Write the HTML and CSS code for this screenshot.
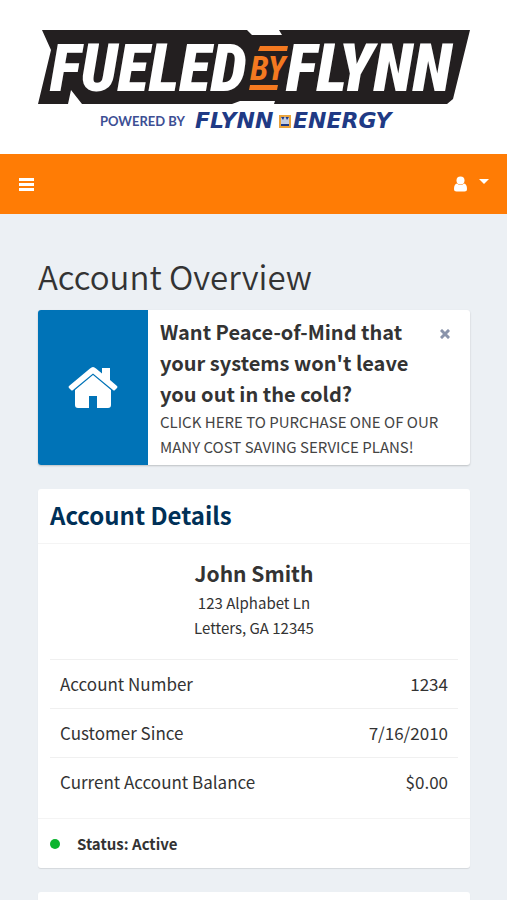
FILE: index.html
```html
<!DOCTYPE html>
<html lang="en">
<head>
    <meta charset="UTF-8">
    <meta name="viewport" content="width=device-width, initial-scale=1.0">
    <title>Account Overview</title>
    <link rel="stylesheet" href="styles.css">
</head>
<body>

<header>
    <a href="#" class="logo">
        <svg viewBox="0 0 432 104" role="img" aria-label="Fueled by Flynn, powered by Flynn Energy">
            <path class="logo-plate" d="M4 0H209L214 5H244L241 0H432L415 69L409 74H236L237 71H202L194 74H44L33 60L30 74H0L13 20Z"/>
            <text class="logo-word" x="12" y="61">FUELED</text>
            <text class="logo-word" x="248" y="61">FLYNN</text>
            <path class="logo-bar" d="M222 16H250L249 21H220ZM212 55H240L239 60H211Z"/>
            <text class="logo-by" x="212" y="50">BY</text>
            <text class="logo-powered" x="62" y="96">POWERED BY</text>
            <text class="logo-energy" x="157" y="98">FLYNN</text>
            <path class="logo-badge" d="M242 86H252V97H242Z"/>
            <path class="logo-crown" d="M243 94V87L245 90L247 86L249 90L251 87V94Z"/>
            <text class="logo-energy" x="255" y="98">ENERGY</text>
        </svg>
    </a>
    <nav class="navbar">
        <button type="button" class="nav-button" aria-label="Toggle navigation">
            <svg width="15" height="13" viewBox="0 0 15 13"><path d="M0 0h15v3H0zM0 5h15v3H0zM0 10h15v3H0z"/></svg>
        </button>
        <button type="button" class="nav-button user-menu" aria-label="User menu">
            <svg width="13" height="16" viewBox="0 0 13 16"><circle cx="6.500" cy="4.500" r="4"/><path d="M3 7.500Q6.500 10.500 10 7.500Q13 8 13 13Q13 15.500 10.500 15.500H2.500Q0 15.500 0 13Q0 8 3 7.500Z"/></svg>
            <svg class="caret" width="10" height="5" viewBox="0 0 10 5"><path d="M0 0h10L5 5z"/></svg>
        </button>
    </nav>
</header>

<main class="content">
    <h1>Account Overview</h1>

    <section class="promo">
        <div class="promo-icon">
            <svg width="50" height="42" viewBox="0 0 50 42">
                <path d="M25 8L43 23V38Q43 41 40 41H29V29H21V41H10Q7 41 7 38V23Z"/>
                <path d="M25 0Q26.500 0 28 1.500L34 6.500V1H42V13L49 19Q50 20 49 21L47 23Q46 24 45 23L25 6.500L5 23Q4 24 3 23L1 21Q0 20 1 19L22 1.500Q23.500 0 25 0Z"/>
            </svg>
        </div>
        <div class="promo-body">
            <div class="promo-heading">
                <h2>Want Peace-of-Mind that your systems won't leave you out in the cold?</h2>
                <button type="button" class="close" aria-label="Close">
                    <svg width="10" height="10" viewBox="0 0 10 10"><path d="M2 2L8 8M8 2L2 8"/></svg>
                </button>
            </div>
            <a href="#">CLICK HERE TO PURCHASE ONE OF OUR MANY COST SAVING SERVICE PLANS!</a>
        </div>
    </section>

    <section class="card">
        <h2 class="card-title">Account Details</h2>
        <div class="card-body">
            <h3>John Smith</h3>
            <address>123 Alphabet Ln<br>Letters, GA 12345</address>
            <dl class="details">
                <div class="row">
                    <dt>Account Number</dt>
                    <dd>1234</dd>
                </div>
                <div class="row">
                    <dt>Customer Since</dt>
                    <dd>7/16/2010</dd>
                </div>
                <div class="row">
                    <dt>Current Account Balance</dt>
                    <dd>$0.00</dd>
                </div>
            </dl>
        </div>
        <div class="card-footer">
            <span class="dot"></span>
            <strong>Status: Active</strong>
        </div>
    </section>

    <section class="card next-card"></section>
</main>

</body>
</html>
```
FILE: styles.css
```css
* {
    box-sizing: border-box;
}

body {
    margin: 0;
    font-family: "Noto Sans CJK SC", "Open Sans", sans-serif;
    font-size: 15px;
    line-height: 25px;
    color: #333;
    background-color: #ecf0f4;
}

h1, h2, h3, dl, dd {
    margin: 0;
}

button {
    padding: 0;
    border: none;
    background: none;
    cursor: pointer;
}

svg {
    display: block;
}

.logo {
    display: block;
    padding: 30px 37px 20px 38px;
    background-color: #fff;
}

.logo svg {
    width: 100%;
}

.logo-plate {
    fill: #231f20;
}

.logo-word {
    font: italic 900 66px "Roboto Condensed", "Open Sans Condensed", Roboto, sans-serif;
    fill: #fff;
}

.logo-by {
    font: italic 700 34px "Roboto Condensed", "Open Sans Condensed", Roboto, sans-serif;
    fill: #f47920;
}

.logo-bar {
    fill: #f47920;
}

.logo-powered {
    font: 700 13px Lato, sans-serif;
    fill: #3d4f94;
}

.logo-energy {
    font: italic 700 22px "DejaVu Sans", sans-serif;
    fill: #203a85;
}

.logo-badge {
    fill: #203a85;
    stroke: #eba33a;
    stroke-width: 2;
}

.logo-crown {
    fill: #c5cde2;
}

.navbar {
    display: flex;
    justify-content: space-between;
    align-items: center;
    height: 60px;
    padding: 0 18px 0 19px;
    background-color: #ff7c05;
}

.nav-button {
    display: flex;
    gap: 12px;
}

.nav-button svg {
    fill: #fff;
}

.nav-button .caret {
    margin-top: 3px;
}

.content {
    padding: 38px 37px 24px 38px;
}

h1 {
    margin-bottom: 10px;
    font-size: 33px;
    font-weight: 350;
    line-height: 48px;
}

.promo {
    display: flex;
    margin-bottom: 24px;
    border-radius: 3px;
    background-color: #fff;
    box-shadow: 0 1px 2px rgba(0, 0, 0, 0.2);
    overflow: hidden;
}

.promo-icon {
    display: flex;
    flex: 0 0 110px;
    align-items: center;
    justify-content: center;
    background-color: #0073b7;
}

.promo-icon svg {
    fill: #fff;
}

.promo-body {
    flex: 1;
    padding: 6px 20px 6px 12px;
}

.promo-heading {
    display: flex;
    align-items: flex-start;
    justify-content: space-between;
    gap: 24px;
}

.promo-heading h2 {
    font-size: 20px;
    line-height: 31px;
}

.promo-body a {
    color: #444;
    text-decoration: none;
}

.close {
    margin-top: 13px;
}

.close svg {
    stroke: #8a94ab;
    stroke-width: 3;
    stroke-linecap: square;
}

.card {
    margin-bottom: 24px;
    border-radius: 3px;
    background-color: #fff;
    box-shadow: 0 1px 1px rgba(0, 0, 0, 0.1);
}

.card-title {
    padding: 10px 12px 12px;
    border-bottom: 1px solid #f4f4f4;
    font-size: 24px;
    line-height: 32px;
    color: #003057;
}

.card-body {
    padding: 13px 12px 12px;
}

.card-body h3 {
    font-size: 21px;
    line-height: 33px;
    text-align: center;
}

address {
    margin-bottom: 19px;
    font-style: normal;
    text-align: center;
}

.row {
    display: flex;
    justify-content: space-between;
    padding: 12px 10px;
    border-top: 1px solid #f0f0f0;
    font-size: 17px;
    line-height: 24px;
}

.card-footer {
    display: flex;
    align-items: center;
    gap: 17px;
    padding: 12px;
    border-top: 1px solid #f4f4f4;
}

.dot {
    width: 10px;
    height: 10px;
    border-radius: 50%;
    background-color: #0bb42e;
}

.next-card {
    height: 120px;
}
```
